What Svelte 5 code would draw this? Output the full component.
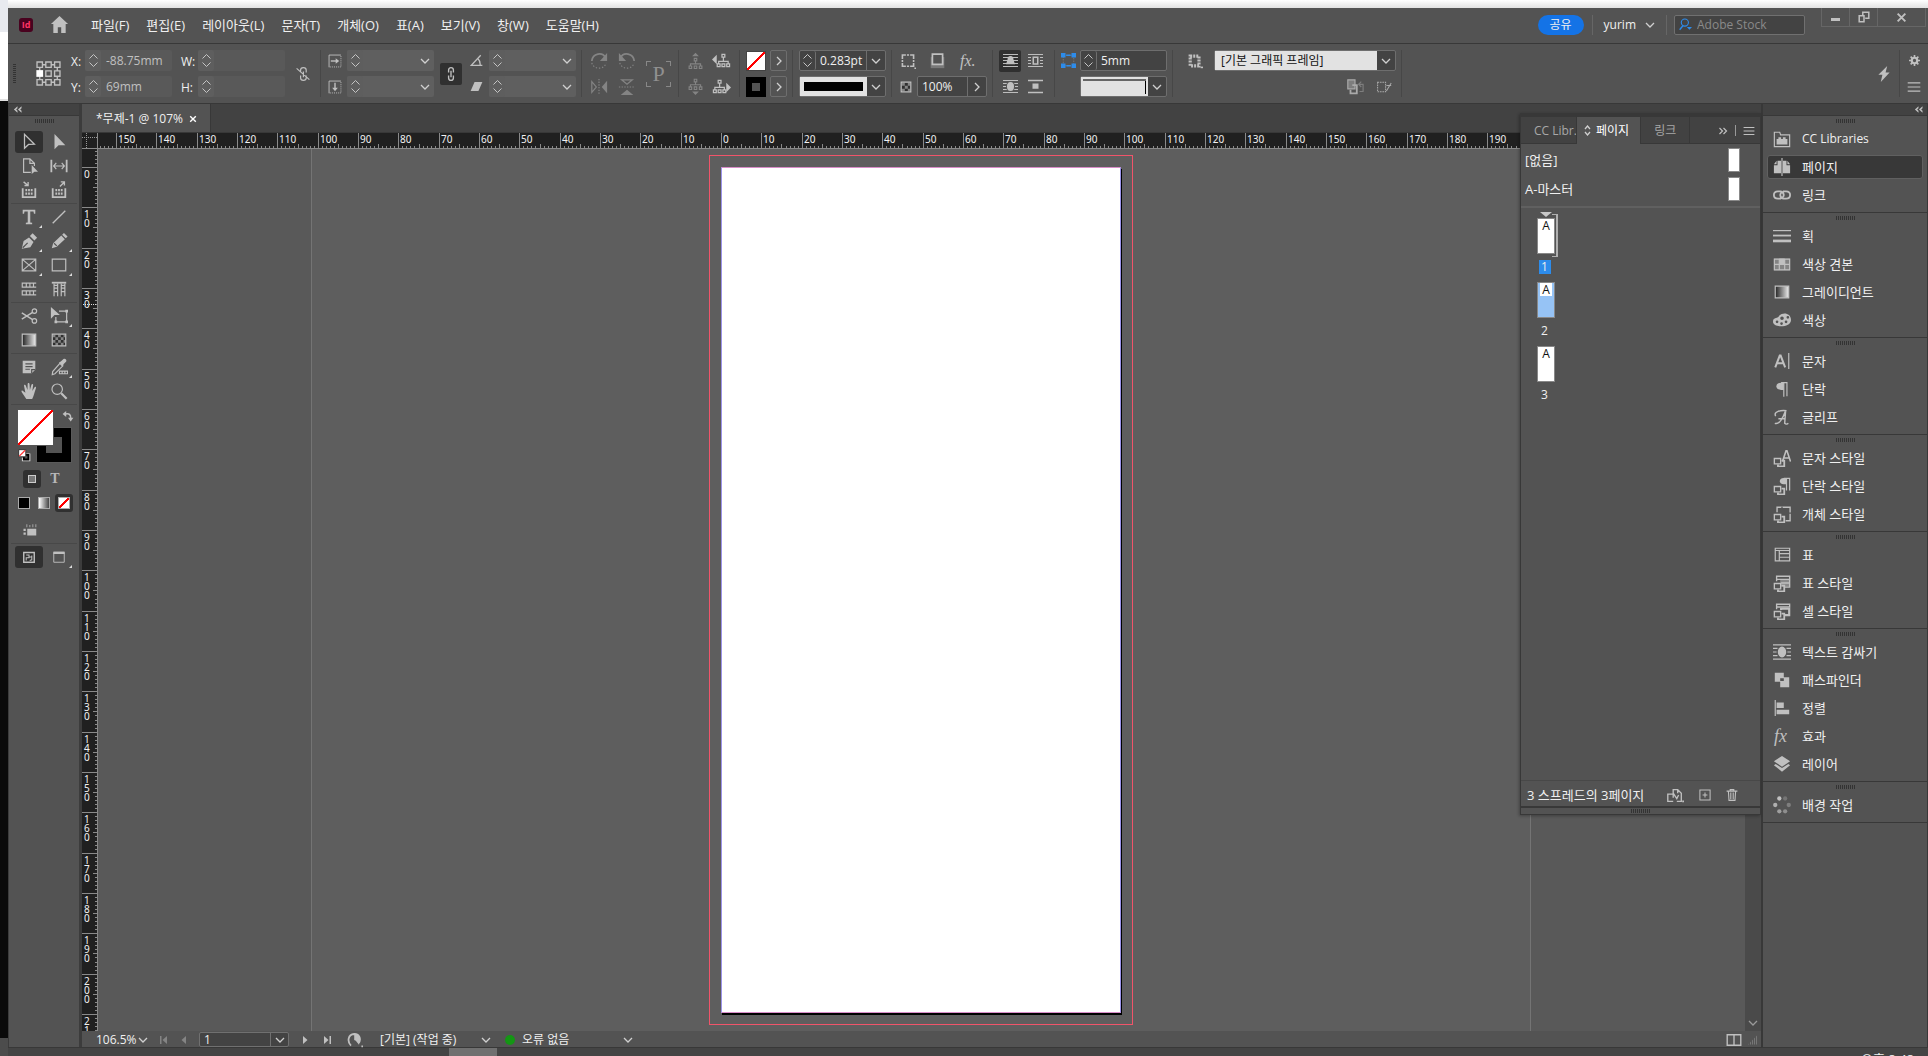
<script>
  const menus = ["파일(F)", "편집(E)", "레이아웃(L)", "문자(T)", "개체(O)", "표(A)", "보기(V)", "창(W)", "도움말(H)"];

  // every icon is drawn on a 20 x 20 grid
  const styleMark =
    '<path d="M1.5 10.5h7v6h-7z" stroke-width="1.5"/><path d="M9.5 13h3v6.2H5.500v-2" stroke-width="2"/>';

  const icons = {
    home: '<path class="f" d="M10 1 1 9.500h2.500V19h4.700v-6h3.600v6h4.700V9.500H19z"/>',
    select: '<path d="M5 1.500v15.500l4.500-4.300 6.500-.2z" stroke-width="1.4"/>',
    direct: '<path class="f" d="M5 1v17l4.500-4.500H17z"/>',
    page: '<path d="M12 17H4V2h7l5 5v3M11 2v5h5"/><path class="f" d="M13 9v10l3-2.500h4z"/>',
    gap: '<path d="M1.500 3v14M18.500 3v14" stroke-width="2"/><path d="M4 10h12M7 6.500 4 10l3 3.500M13 6.500 16 10l-3 3.500"/>',
    collect: '<path d="M3 8v10h14V8" stroke-width="2"/><path d="M6 10h2m1 0h2m1 0h2M6 14h2m1 0h2m1 0h2" stroke-width="2.500"/><path d="m4 1 5 4M9 1v4H5" stroke-width="1.500"/>',
    place: '<path d="M3 8v10h14V8" stroke-width="2"/><path d="M6 10h2m1 0h2m1 0h2M6 14h2m1 0h2m1 0h2" stroke-width="2.500"/><path d="m11 6 5-5M12 1h4v4" stroke-width="1.500"/>',
    type: '<path class="f" d="M3 2h14v4.500h-1.500L15 4h-3.600v12l2.100.5V18h-7v-1.500l2.100-.5V4H5l-.5 2.500H3z"/>',
    line: '<path d="M3 17 17 3" stroke-width="1.500"/>',
    pen: '<path class="f" d="M2 18.500 4 10l6-4 5 5-3.500 6zM11 4.500 14 1.500l5 5-3 3z"/><path class="k" d="m3 17.500 5.500-5.500"/>',
    pencil: '<path class="f" d="m2 18 1.500-5.500 9-8.500 4 4-9 8.500zM13.500 3l2-2 4 4-2 2z"/><path class="k" d="m4.500 12.500 3 3"/>',
    xframe: '<path d="M2.500 3.500h15v13h-15zM3 4l14 12M17 4 3 16"/>',
    rect: '<path d="M2.500 3.500h15v13h-15z"/>',
    rows: '<path d="M18 3.500H2.500v4.500H18M18 12H2.500v4.500H18M7 4v4M11 4v4M15 4v4M7 12v4M11 12v4M15 12v4"/>',
    cols: '<path d="M2 3h16" stroke-width="2"/><path d="M4.500 4v14M8.500 4v14M12.500 4v14M16.500 4v14M4 9h4M4 13h4M12 9h4M12 13h4M4 6h4M12 6h4"/>',
    scissors: '<circle cx="16" cy="4.500" r="2.500"/><circle cx="16" cy="15.500" r="2.500"/><path d="M14 6 2 13.500M14 14 2 6.500" stroke-width="1.700"/>',
    transform: '<path class="f" d="M1 0v13l4-4h6z"/><path d="M10 4.500h8.500v12h-12V11"/><path d="M17 3h3v3h-3zM17 15h3v3h-3zM5 15h3v3H5z" class="f"/>',
    gradient: '<path d="M2.500 3.500h15v13h-15z" fill="url(#fade)"/>',
    feather: '<path d="M2.500 3.500h15v13h-15z" fill="#303030"/><path class="f" opacity=".6" d="M3 4h3v3H3zm6 0h3v3H9zM6 7h3v3H6zm6 0h3v3h-3zM3 10h3v3H3zm6 0h3v3H9zM6 13h3v3H6zm6 0h3v3h-3zm3-9h2v3h-2zm0 6h2v3h-2z"/>',
    note: '<path class="f" d="M3 3h14v10l-4 4H3z"/><path class="k" d="M6 6.500h8M6 9.500h8M6 12.500h5M13 17v-4h4"/>',
    dropper: '<path d="m11 6 3 3-8.500 8.500-3 1 .5-3.500z"/><path class="f" d="m10 5 2-1 3-3c2-1 4 1 3 3l-3 3-.5 2.500z"/><path d="M10.500 14.500h9v3h-9zM13.500 15v2M16.500 15v2"/>',
    hand: '<path class="f" d="M7 19 2 11.500c-1-2 .500-2.500 1.700-1.200L6 12 4.500 4.500c-.3-1.800 1.500-2 2-.4L8.300 9 8.500 2.500c0-1.700 2-1.700 2.100 0L11 9l1.700-6c.5-1.500 2.200-1 1.900.5L13.700 10l2.300-4c.9-1.300 2.300-.5 1.700.9-1.500 4-2.200 8.500-4.200 12.100z"/>',
    zoom: '<circle cx="8" cy="8" r="5.800"/><path d="m12.500 12.500 6 6" stroke-width="2.400"/>',
    swap: '<path d="M6 6.500c6-1.500 8.500 1 8.500 7" stroke-width="2.500"/><path class="f" d="m1 6.500 6-5v10zM10 13h9l-4.500 6z"/>',
    defaults: '<path d="M9 8h9v10H7v-5" stroke="#ddd" stroke-width="2"/><path d="M9 9h7v7H9z" stroke="#000" stroke-width="3"/><path d="M1 1h11v11H1z" fill="#fff" stroke="#333" stroke-width="1.500"/><path d="M2 11 11 2" stroke="#f33" stroke-width="2"/>',
    toggle: '<path class="f" d="M7 9h12v9H7zM2 9h3v3H2zM2 14h3v3H2zM6 3h1v4H6zm4 1h1v3h-1zm4-1h1v4h-1zm4 0h1v4h-1z"/>',
    preview: '<path d="M2.500 3.500h15v14h-15z" stroke-width="2"/><path d="M6 7h4v4H6v4m4-5h4M14 8v6l-3 1" stroke-width="1.500"/>',
    screen: '<path d="M2.500 3.500h15v14h-15z"/><path d="M2 4h16" stroke-width="3.500"/>',
    refpoint: '<path d="M1.500 1.500h4v4h-4zm6.500 0h4v4H8zm6.500 0h4v4h-4zM8 8h4v4H8zm6.500 0h4v4h-4zm-13 6.500h4v4h-4zm6.500 0h4v4H8zm6.500 0h4v4h-4zM5.500 3.500H8m4 0h2.500m-9 13H8m4 0h2.500m-11-11v9m13-9v2.500m0 4v2.500" stroke-width="1"/><path d="M1 7.500h5v5H1z" fill="#fff" stroke="none"/>',
    unlink: '<path d="M7 8V5c0-4 7-4 7 0v3M7 12v3c0 4 7 4 7 0v-3M10.500 7v7M2 3l16 14" stroke-width="1.500"/>',
    chain: '<path d="M7 8V5c0-4 6-4 6 0v3M7 12v3c0 4 6 4 6 0v-3M10 6v8" stroke-width="1.700"/>',
    scaleX: '<path d="M1.500 19V1.500h17"/><path d="M18.500 3v15.500H2" stroke-dasharray="1.500 1.500"/><path d="M4 10h10" stroke-width="2"/><path class="f" d="m11 6 5 4-5 4z"/>',
    scaleY: '<path d="M1.500 19V1.500h17"/><path d="M18.500 3v15.500H2" stroke-dasharray="1.500 1.500"/><path d="M10 4v10" stroke-width="2"/><path class="f" d="m6 11 4 5 4-5z"/>',
    angle: '<path d="M16.500 2 2 17.500h17M12 7c3 3 4 6 3.500 10" stroke-width="2"/>',
    shear: '<path class="f" d="M7 3h12l-6 14H1z"/>',
    rotateCw: '<path d="M2 10C3 1 14 0 17 6" stroke-width="2"/><path class="f" d="M19 1v9h-8z"/><path d="M2 12c2 8 14 8 16 0" stroke-dasharray="1.500 2"/>',
    rotateCcw: '<path d="M18 10C17 1 6 0 3 6" stroke-width="2"/><path class="f" d="M1 1v9h8z"/><path d="M2 12c2 8 14 8 16 0" stroke-dasharray="1.500 2"/>',
    flipH: '<path d="M2 4v12l5-6z"/><path class="f" d="M19 3v14l-6-7z"/><path d="M10 1v18" stroke-dasharray="1.500 1.500"/>',
    flipV: '<path d="M4 2h12l-6 5z"/><path class="f" d="M3 19h14l-7-6z"/><path d="M1 10h18" stroke-dasharray="1.500 1.500"/>',
    treeUp: '<path class="f" d="m6 5 4-4 4 4z"/><path d="M8.500 7.500h3v3h-3zM10 11v3M4 16v-2h12v2M2.500 16.500h3v3h-3zm6 0h3v3h-3zm6 0h3v3h-3z"/>',
    treeDown: '<path class="f" d="m6 16 4 4 4-4z"/><path d="M8.500 1.500h3v3h-3zM10 5v3M4 10V8h12v2M2.500 10.500h3v3h-3zm6 0h3v3h-3zm6 0h3v3h-3z"/>',
    treePrev: '<path class="f" d="m0 9 5-5v10z"/><path d="M10.500 3.500h3v3h-3zM12 7v4M7 14v-3h10v3M5.500 13.500h3v3h-3zm5 0h3v3h-3zm5 0h3v3h-3z"/>',
    treeNext: '<path class="f" d="m20 11-5-5v10z"/><path d="M6.500 3.500h3v3h-3zM8 7v4M3 14v-3h10v3M1.500 13.500h3v3h-3zm5 0h3v3h-3zm5 0h3v3h-3z"/>',
    corner: '<path d="M3 2.500h14v14H3z" stroke-width="2"/><path class="k" d="M8 1v4M12 1v4M8 14v4M12 14v4M1 8h4M1 12h4M15 8h4M15 12h4"/><path class="f" d="M18 18h2v2h-2z"/>',
    shadow: '<path class="f" opacity=".35" d="M2 6h16v13H2z"/><path d="M4 2.500h12v12H4z" fill="#535353" stroke-width="2"/>',
    opacity: '<path d="M2 2h16v16H2z" fill="#303030" stroke-width="2"/><path class="f" opacity=".6" d="M3 3h5v5H3zm5 5h5v5H8zm5-5h4v5h-4zM3 13h5v4H3zm10 0h4v4h-4z"/>',
    wrapNone: '<path d="M0 2h20M0 6h20M0 10h20M0 14h20M0 18h20"/><path class="f" d="M10 4c3 0 4 2 4 5l2 6H4l2-6c0-3 1-5 4-5z"/>',
    wrapBox: '<path d="M0 2h20M0 6h4M0 10h4M0 14h4M0 18h20M16 6h4M16 10h4M16 14h4"/><path d="M7 5.500h6v9H7z" stroke-width="2"/>',
    wrapShape: '<path d="M0 2h20M0 6h5M0 10h4M0 14h5M0 18h20M15 6h5M16 10h4M15 14h5"/><ellipse class="f" cx="10" cy="10" rx="4.700" ry="6"/>',
    wrapJump: '<path d="M0 2h20M0 18h20" stroke-width="2"/><path class="f" d="M6 6h8v7H6z"/>',
    blueCorner: '<path d="M3 3h14v14H3z" stroke="#777" stroke-dasharray="2 1.500"/><path fill="#2d8ceb" stroke="none" d="M0 0h6v6H0zM14 0h6v6h-6zM0 14h6v6H0zM14 14h6v6h-6zM7 2h6v2H7zM7 16h6v2H7z"/>',
    frame: '<path d="M4 4h11v12H4z" stroke-width="4" stroke-dasharray="2.500 1.300"/><path class="f" d="M17 17h3v2h-3z"/>',
    clear: '<path d="M2 2h8v10H2z" fill="#888"/><path d="M7 8h5v9H5v-4" stroke-width="2"/><path d="M14 7h5v8h-4m2-11-3 3 3 3" opacity=".5"/>',
    clearFx: '<path d="M2 4h10v12H2z" stroke-dasharray="2 1"/><path d="m13 15 6-10M13 8h6"/>',
    bolt: '<path class="f" d="M14 0 3 11h5L6 20 17 8h-5z"/>',
    gear: '<circle cx="10" cy="10" r="5" stroke-width="4"/><path d="M10 0v4m0 12v4M0 10h4m12 0h4M3 3l3 3m8 8 3 3M17 3l-3 3m-8 8-3 3" stroke-width="3"/>',
    menu: '<path d="M1 4h18M1 10h18M1 16h18" stroke-width="1.700"/>',
    collapse: '<path class="f" d="m10 3-8 7 8 7v-4l-3-3 3-3zM19 3l-8 7 8 7v-4l-3-3 3-3z"/>',
    expand: '<path d="m3 4 6 6-6 6M11 4l6 6-6 6" stroke-width="2.400"/>',
    libraries: '<path d="M1.500 18.500V2.500h6l1 3h10v13z"/><path class="f" d="M4 10h2V8h3v2h2V8h3v2h2v6H4z"/>',
    pages: '<path d="M10 0v20"/><path class="f" d="M1 8h4V3h4v14H1zM19 8h-4V3h-4v14h8zM1 7l3-4v4zM19 7l-3-4v4z"/>',
    links: '<path d="M9 14H5.500c-6 0-6-8 0-8H8c4.500 0 5 6 2 7M11 6h3.500c6 0 6 8 0 8H12c-4.500 0-5-6-2-7" stroke-width="2"/>',
    stroke: '<path d="M0 4h20" /><path d="M0 9.500h20" stroke-width="2"/><path d="M0 15.500h20" stroke-width="3"/>',
    swatches: '<path class="f" opacity=".45" d="M1 4h18v13H1z"/><path class="f" d="M7 4h6v6H7z"/><path d="M1.500 4.500h17v12h-17zM7 4v13M13 4v13M1 10.500h18"/>',
    color: '<path class="f" fill-rule="evenodd" d="M7 5c-1 4-7 1-7 7 0 7 20 7 20-2C20 2 11 1 7 5zm1 3a2 2 0 1 0 4 0 2 2 0 0 0-4 0zm7-1a1.500 1.500 0 1 0 3 0 1.500 1.500 0 0 0-3 0zM3 12a1.500 1.500 0 1 0 3 0 1.500 1.500 0 0 0-3 0zm5 2a1.500 1.500 0 1 0 3 0 1.500 1.500 0 0 0-3 0zm5-2a1.500 1.500 0 1 0 3 0 1.500 1.500 0 0 0-3 0z"/>',
    character: '<path d="m2.500 17 5-13h1l5 13M4.500 12.500h7" stroke-width="2.200"/><path d="M17.500 1v18"/>',
    paragraph: '<path class="f" d="M9 3h3v8H9c-7 0-7-8 0-8z"/><path d="M12 2.500v16M15.500 18V3H9"/>',
    glyphs: '<path d="M2 17c5 2 9-6 12-14l-1 14c1 1 3 1 4 0M6 12h8M3 9c-3-5 6-7 12-6" stroke-width="1.600"/>',
    charStyle: '<path d="m10.500 14 4-12h1l4 12M12 10h6" stroke-width="1.800"/>' + styleMark,
    paraStyle: '<path class="f" d="M12 1h3v7h-3c-6 0-6-7 0-7z"/><path d="M15 1v14M18.500 15V1.500H12"/>' + styleMark,
    objStyle: '<path d="M4.500 8V2.500H19v15h-5" stroke-width="1.500"/><path class="k" d="M9 2.500h2M17 9h3"/>' + styleMark,
    table: '<path d="M2.500 2.500h16v14h-16zM2.500 5h16M7 5v11M7 8.500h11M7 12.500h11"/>',
    tableStyle: '<path class="f" opacity=".5" d="M8 6h10v8H8z"/><path d="M4 8V2.500h14.500v12H13M4 6h14M9 10h9" stroke-width="1.500"/>' + styleMark,
    cellStyle: '<path d="M4 8V2.500h14.500v3H4" stroke-width="1.500"/><path d="M9 9V7.500h9v7h-5" stroke-width="2.400"/>' + styleMark,
    pathfinder: '<path class="f" fill-rule="evenodd" d="M2 2h10v5h6v11H8v-6H2zm6 6v3h4V8z"/>',
    align: '<path d="M2.500 1v18"/><path class="f" d="M4 4h8v6H4zM4 12h14v5H4z"/>',
    layers: '<path class="f" d="m10 1 9 6-9 6-9-6zM3 10l7 4.500L17 10l2 1.500-9 7-9-7z"/>',
    tasks: '<g class="f"><circle cx="7" cy="2.800" r="2.400"/><circle cx="13.500" cy="2.800" r="2.400" opacity=".3"/><circle cx="2.500" cy="10" r="2.400" opacity=".85"/><circle cx="17.500" cy="10" r="2.400" opacity=".4"/><circle cx="7" cy="17" r="2.400" opacity=".7"/><circle cx="13.500" cy="17" r="2.400" opacity=".55"/></g>',
    newSize: '<path d="M8 17H2V9h6M8 13V4h5l4 4v9h-5M13 4v4M8 8l4 6 2-4" stroke-width="1.500"/><path class="f" d="M18 16h2v2h-2z"/>',
    newPage: '<path d="M1.500 1.500h17v17h-17zM10 6v8M6 10h8" stroke-width="1.700"/>',
    trash: '<path d="M1 3.500h18M7 3V1h6v2M4 4l1 15h10l1-15M8 6v11M12 6v11" stroke-width="1.800"/>',
    first: '<path d="M3.500 2v16" stroke-width="3"/><path class="f" d="M16 2v16l-9-8z"/>',
    prev: '<path class="f" d="M14 2v16l-9-8z"/>',
    next: '<path class="f" d="M6 2v16l9-8z"/>',
    last: '<path d="M16.500 2v16" stroke-width="3"/><path class="f" d="M4 2v16l9-8z"/>',
    preflight: '<path d="M5 17C0 12 1 3 9 2.500c6 0 9 5 6 11" stroke-width="2.200"/><path class="f" d="M9 2c8 0 8 8 6 14l-4-5-2-1zM18 17h2v2h-2z"/>',
    spread: '<path d="M1.500 3.500h17v13h-17z" stroke-width="1.700"/><path d="M10 3v14" stroke-width="1.700"/>',
    restore: '<path d="M2 8h8v10H2z" stroke-width="2.500"/><path d="M8 7V2h10v10h-6" stroke-width="2.500"/>',
    close: '<path d="m3 3 14 14M17 3 3 17" stroke-width="3.500"/>',
    search: '<circle cx="9" cy="7" r="5.500" stroke-width="1.700"/><path d="m6 12-5 6" stroke-width="2.200"/><path class="f" d="M12 14h8l-4 4z"/>'
  };

  const tools = [
    [["select", "선택"], ["direct", "직접 선택"], ["page", "페이지"], ["gap", "간격"], ["collect", "내용 수집"], ["place", "내용 배치"]],
    [["type", "문자", true], ["line", "선"], ["pen", "펜", true], ["pencil", "연필", true], ["xframe", "사각형 프레임", true], ["rect", "사각형", true], ["rows", "가로 격자"], ["cols", "세로 격자"]],
    [["scissors", "가위"], ["transform", "자유 변형", true], ["gradient", "그레이디언트"], ["feather", "그레이디언트 페더"]],
    [["note", "메모"], ["dropper", "스포이드", true], ["hand", "손"], ["zoom", "확대/축소"]]
  ];

  const dock = [
    [["libraries", "CC Libraries"], ["pages", "페이지"], ["links", "링크"]],
    [["stroke", "획"], ["swatches", "색상 견본"], ["gradient", "그레이디언트"], ["color", "색상"]],
    [["character", "문자"], ["paragraph", "단락"], ["glyphs", "글리프"]],
    [["charStyle", "문자 스타일"], ["paraStyle", "단락 스타일"], ["objStyle", "개체 스타일"]],
    [["table", "표"], ["tableStyle", "표 스타일"], ["cellStyle", "셀 스타일"]],
    [["wrapShape", "텍스트 감싸기"], ["pathfinder", "패스파인더"], ["align", "정렬"], ["fx", "효과"], ["layers", "레이어"]],
    [["tasks", "배경 작업"]]
  ];

  let activeTool = $state("select");
  let activePanel = $state("페이지");
  let currentPage = $state(1);

  // rulers: 10mm is 40.33px on screen at this zoom
  const scale = 4.033;
  const originX = 623;
  const originY = 18;

  function ticks(origin, from, to, size, vertical) {
    let d = "";
    for (let mm = from; mm <= to; mm++) {
      const at = Math.round(origin + mm * scale);
      const len = mm % 10 === 0 ? size : mm % 5 === 0 ? 4 : 2;
      d += vertical ? `M${size - len} ${at}h${len}v1h-${len}z` : `M${at} ${size - len}h1v${len}h-1z`;
    }
    return d;
  }

  const labels = (origin, from, to) => {
    const out = [];
    for (let mm = from; mm <= to; mm += 10) {
      out.push({ text: String(Math.abs(mm)), at: Math.round(origin + mm * scale) });
    }
    return out;
  };

  const topTicks = ticks(originX, -154, 260, 15, false);
  const topLabels = labels(originX, -150, 190);
  const sideTicks = ticks(originY, -4, 240, 15, true);
  const sideLabels = labels(originY, 0, 210);
</script>

{#snippet icon(name, size = 18)}
  {#if name === "fx"}
    <span class="fx" aria-hidden="true">fx</span>
  {:else}
    <svg class="icon" width={size} height={size} viewBox="0 0 20 20" aria-hidden="true">{@html icons[name]}</svg>
  {/if}
{/snippet}

{#snippet chevron()}
  <svg class="chev" width="10" height="6" viewBox="0 0 10 6" aria-hidden="true"><path d="m1 1 4 4 4-4" /></svg>
{/snippet}

{#snippet spinner()}
  <span class="spinner">
    <button aria-label="증가"><svg width="9" height="5" viewBox="0 0 9 5"><path d="M.5 4.500 4.500 .5l4 4" /></svg></button>
    <button aria-label="감소"><svg width="9" height="5" viewBox="0 0 9 5"><path d="M.5 .5l4 4 4-4" /></svg></button>
  </span>
{/snippet}

{#snippet field(id, label, value, kind, drop)}
  <div class="field {kind}">
    {@render spinner()}
    <input {id} aria-label={label} {value} />
    {#if drop}<button class="drop" aria-label="{label} 목록">{@render chevron()}</button>{/if}
  </div>
{/snippet}

{#snippet thumb(n)}
  <button class="thumb" class:selected={n === 2} onclick={() => (currentPage = n)} aria-label="{n}페이지"><span>A</span></button>
{/snippet}

<svg width="0" height="0" class="defs" aria-hidden="true">
  <linearGradient id="fade"><stop offset="0" stop-color="#222" /><stop offset="1" stop-color="#eee" /></linearGradient>
</svg>

<div class="desktop">
  <div class="behind"></div>
  <div class="above"></div>

  <div class="app">
    <header class="menubar">
      <span class="logo">Id</span>
      <button class="home" aria-label="홈">{@render icon("home", 19)}</button>
      <nav>
        {#each menus as menu}<button>{menu}</button>{/each}
      </nav>
      <button class="share">공유</button>
      <button class="user">yurim {@render chevron()}</button>
      <label class="search">
        {@render icon("search", 13)}
        <input placeholder="Adobe Stock" aria-label="Adobe Stock" />
      </label>
      <div class="window">
        <button aria-label="최소화"><span class="minimize"></span></button>
        <button aria-label="이전 크기로">{@render icon("restore", 12)}</button>
        <button aria-label="닫기">{@render icon("close", 11)}</button>
      </div>
    </header>

    <div class="control">
      <span class="vgrip"></span>
      <span class="ref">{@render icon("refpoint", 27)}</span>
      <div class="grid xywh">
        <label for="x">X:</label>{@render field("x", "X", "-88.75mm", "off dim")}
        <label for="w" class="right">W:</label>{@render field("w", "W", "", "off")}
        <label for="y">Y:</label>{@render field("y", "Y", "69mm", "off dim")}
        <label for="h" class="right">H:</label>{@render field("h", "H", "", "off")}
      </div>
      <button class="unlink" aria-label="비율 유지">{@render icon("unlink", 16)}</button>
      <i class="sep wide"></i>
      <div class="grid pair">
        {@render icon("scaleX", 14)}{@render field("sx", "X 비율", "", "off flat", true)}
        {@render icon("scaleY", 14)}{@render field("sy", "Y 비율", "", "off flat", true)}
      </div>
      <button class="chain" aria-label="비율 고정">{@render icon("chain", 16)}</button>
      <div class="grid pair">
        {@render icon("angle", 13)}{@render field("rot", "회전", "", "off flat", true)}
        {@render icon("shear", 13)}{@render field("shear", "기울이기", "", "off flat", true)}
      </div>
      <i class="sep"></i>
      <div class="grid turn faint">
        {@render icon("rotateCw", 18)}{@render icon("rotateCcw", 18)}
        {@render icon("flipH", 18)}{@render icon("flipV", 18)}
      </div>
      <span class="proxy">P</span>
      <i class="sep"></i>
      <div class="grid tree">
        <span class="faint">{@render icon("treeUp", 17)}</span>{@render icon("treePrev", 19)}
        <span class="faint">{@render icon("treeDown", 17)}</span>{@render icon("treeNext", 19)}
      </div>
      <i class="sep"></i>
      <div class="grid fill">
        <span class="swatch none"></span><button class="more" aria-label="칠"><svg class="chev" width="6" height="10" viewBox="0 0 6 10"><path d="m1 1 4 4-4 4" /></svg></button>
        <span class="swatch ring"></span><button class="more" aria-label="획"><svg class="chev" width="6" height="10" viewBox="0 0 6 10"><path d="m1 1 4 4-4 4" /></svg></button>
      </div>
      <i class="sep"></i>
      <div class="grid">
        {@render field("weight", "획 두께", "0.283pt", "on", true)}
        <button class="sample" aria-label="획 유형"><span class="bar"></span>{@render chevron()}</button>
      </div>
      <i class="sep"></i>
      <div class="grid effects">
        <div class="row">{@render icon("corner", 16)}{@render icon("shadow", 17)}<span class="fx small">fx.</span></div>
        <div class="row tight">
          {@render icon("opacity", 12)}
          <div class="field on percent">
            <input aria-label="불투명도" value="100%" />
            <button class="drop" aria-label="불투명도 목록"><svg class="chev" width="6" height="10" viewBox="0 0 6 10"><path d="m1 1 4 4-4 4" /></svg></button>
          </div>
        </div>
      </div>
      <i class="sep"></i>
      <div class="grid wrap">
        <button class="pressed" aria-label="감싸기 없음">{@render icon("wrapNone", 15)}</button>{@render icon("wrapBox", 15)}
        <button aria-label="모양 감싸기">{@render icon("wrapShape", 15)}</button>{@render icon("wrapJump", 15)}
      </div>
      <i class="sep"></i>
      <div class="grid pair">
        {@render icon("blueCorner", 15)}{@render field("radius", "모퉁이 크기", "5mm", "on")}
        <span></span><button class="sample" aria-label="모퉁이 모양"><span class="edge"></span>{@render chevron()}</button>
      </div>
      <i class="sep"></i>
      <div class="grid style">
        {@render icon("frame", 16)}
        <div class="picker">
          <select aria-label="개체 스타일"><option>[기본 그래픽 프레임]</option></select>
          <span class="arrow">{@render chevron()}</span>
        </div>
        <div class="row reset">{@render icon("clear", 18)}{@render icon("clearFx", 16)}</div>
      </div>
      <i class="sep"></i>
      <span class="spacer"></span>
      <button class="bolt" aria-label="빠른 작업">{@render icon("bolt", 16)}</button>
      <i class="sep last"></i>
      <div class="grid end">{@render icon("gear", 11)}{@render icon("menu", 14)}</div>
    </div>

    <div class="workspace">
      <aside class="toolbox">
        <div class="strip left">{@render icon("collapse", 9)}</div>
        <span class="grip"></span>
        {#each tools as section}
          <div class="tools">
            {#each section as [name, label, more]}
              <button class="tool" class:active={activeTool === name} class:flyout={more} aria-label={label} onclick={() => (activeTool = name)}>
                {@render icon(name, 18)}
              </button>
            {/each}
          </div>
        {/each}
        <div class="colors">
          <span class="stroke-color"></span>
          <span class="fill-color"></span>
          <span class="swap">{@render icon("swap", 12)}</span>
          <span class="default">{@render icon("defaults", 13)}</span>
        </div>
        <div class="mode">
          <button class="pressed" aria-label="컨테이너에 서식 적용"><span class="box"></span></button>
          <button aria-label="텍스트에 서식 적용" class="serif">T</button>
        </div>
        <div class="apply">
          <button aria-label="색상"><span class="chip"></span></button>
          <button aria-label="그레이디언트"><span class="chip grad"></span></button>
          <button aria-label="없음" class="pressed"><span class="chip none"></span></button>
        </div>
        <div class="toggle">{@render icon("toggle", 15)}</div>
        <div class="tools view">
          <button class="tool active" aria-label="보기 옵션">{@render icon("preview", 14)}</button>
          <button class="tool flyout" aria-label="화면 모드">{@render icon("screen", 14)}</button>
        </div>
      </aside>

      <main class="document">
        <div class="tabs">
          <div class="tab">*무제-1 @ 107%<button aria-label="탭 닫기">{@render icon("close", 8)}</button></div>
        </div>
        <div class="ruler">
          <span class="origin"></span>
          <svg class="top-ruler" height="15">
            <path d={topTicks} />
            {#each topLabels as l}<text x={l.at + 2} y="10">{l.text}</text>{/each}
          </svg>
        </div>
        <div class="body">
          <div class="side">
            <svg width="15" height="100%">
              <path d={sideTicks} />
              <path class="cursor" d="M1 155.500h14" />
              {#each sideLabels as l}
                {#each l.text.split("") as digit, i}<text x="2" y={l.at + 11 + i * 9}>{digit}</text>{/each}
              {/each}
            </svg>
          </div>
          <div class="canvas">
            <div class="pasteboard"></div>
            <div class="bleed"></div>
            <div class="sheet"></div>
          </div>
          <div class="scroll">{@render chevron()}</div>
        </div>
        <footer class="status">
          <span class="zoom">106.5%</span>{@render chevron()}
          <button class="faint nav-first" aria-label="첫 페이지">{@render icon("first", 10)}</button>
          <button class="faint nav-prev" aria-label="이전 페이지">{@render icon("prev", 10)}</button>
          <div class="goto"><input aria-label="페이지" value={currentPage} /><span>{@render chevron()}</span></div>
          <button class="nav-next" aria-label="다음 페이지">{@render icon("next", 10)}</button>
          <button class="nav-last" aria-label="마지막 페이지">{@render icon("last", 10)}</button>
          <span class="preflight">{@render icon("preflight", 16)}</span>
          <span class="profile">[기본] (작업 중)</span>{@render chevron()}
          <span class="dot"></span>
          <span class="errors">오류 없음</span>{@render chevron()}
          <span class="spacer"></span>
          {@render icon("spread", 16)}
          <span class="resize"></span>
        </footer>

        <section class="panel">
          <div class="panel-tabs">
            <button class="clip">CC Libr.</button>
            <button class="current"><svg class="chev" width="7" height="11" viewBox="0 0 7 11"><path d="m1 4 2.500-3L6 4M1 7l2.500 3L6 7" /></svg>페이지</button>
            <button>링크</button>
            <span class="spacer"></span>
            {@render icon("expand", 10)}
            <i></i>
            {@render icon("menu", 12)}
          </div>
          <div class="masters">
            <div class="master">[없음]<span></span></div>
            <div class="master">A-마스터<span></span></div>
          </div>
          <div class="pages">
            <svg class="marker" width="12" height="5" viewBox="0 0 12 5"><path d="M0 0h12L6 5z" /></svg>
            <div class="first">{@render thumb(1)}</div>
            <span class="num now">1</span>
            {@render thumb(2)}
            <span class="num">2</span>
            {@render thumb(3)}
            <span class="num">3</span>
          </div>
          <div class="panel-foot">
            <span>3 스프레드의 3페이지</span>
            <button aria-label="페이지 크기 편집">{@render icon("newSize", 18)}</button>
            <button aria-label="새 페이지">{@render icon("newPage", 12)}</button>
            <button aria-label="페이지 삭제">{@render icon("trash", 12)}</button>
          </div>
          <div class="panel-end"><span class="grip"></span></div>
        </section>
      </main>

      <aside class="dock">
        <div class="strip right">{@render icon("collapse", 9)}</div>
        {#each dock as group}
          <div class="group">
            <span class="grip"></span>
            {#each group as [name, label]}
              <button class="entry" class:active={activePanel === label} class:latin={label === "CC Libraries"} onclick={() => (activePanel = label)}>
                <span class="glyph">{@render icon(name, 18)}</span>{label}
              </button>
            {/each}
          </div>
        {/each}
      </aside>
    </div>
  </div>

  <div class="taskbar"><span class="task"></span><span class="clock">오후 8:48</span></div>
</div>

<style>
  :global(body) {
    overflow: hidden;
    background: #444;
  }

  .desktop,
  .desktop * {
    box-sizing: border-box;
  }

  .desktop {
    --ui: "Open Sans", "Noto Sans CJK KR", sans-serif;
    --edge: #383838;
    display: grid;
    grid-template: 8px 1fr 8px / 8px 1fr;
    height: 100vh;
    font: 13px/16px var(--ui);
    color: #f0f0f0;
    cursor: default;
  }

  button,
  input,
  select {
    font: inherit;
    color: inherit;
    background: none;
    border: 0;
    border-radius: 0;
    padding: 0;
    margin: 0;
    min-width: 0;
    outline: 0;
  }

  .defs {
    position: absolute;
  }

  .icon {
    display: block;
    flex: none;
    fill: none;
    stroke: currentColor;
    stroke-width: 1.3;
    color: #c0c0c0;
  }

  .icon :global(.f) {
    fill: currentColor;
    stroke: none;
  }

  .icon :global(.k) {
    stroke: #535353;
  }

  .chev {
    display: block;
    flex: none;
    fill: none;
    stroke: #d0d0d0;
    stroke-width: 1.3;
  }

  .fx {
    font: italic 18px/18px "Liberation Serif", serif;
    color: #c0c0c0;
    padding-left: 1px;
  }

  .faint {
    opacity: 0.45;
  }

  .spacer {
    flex: 1;
  }

  .behind {
    grid-row: 1 / 4;
    background: linear-gradient(#e8eaef 32px, #fff 32px 99px, #e0e0e0 99px 101px, #0a0a0a 101px calc(100% - 18px), #4c4c4c 0);
  }

  .above {
    background: linear-gradient(#fff, #e2e2e2);
  }

  .app {
    display: flex;
    flex-direction: column;
    min-width: 0;
    min-height: 0;
    background: #535353;
  }

  /* menu bar */
  .menubar {
    display: flex;
    align-items: center;
    height: 36px;
    flex: none;
    padding-bottom: 2px;
    border-bottom: 1px solid var(--edge);
  }

  .logo {
    width: 14px;
    height: 14px;
    margin-left: 11px;
    border-radius: 3px;
    background: #49021f;
    color: #ff3366;
    font: bold 9px/14px "Open Sans", sans-serif;
    text-align: center;
  }

  .home {
    margin: 0 22px 0 17px;
  }

  nav {
    display: flex;
    gap: 17px;
    flex: 1;
  }

  .share {
    width: 46px;
    height: 20px;
    margin-right: 8px;
    border-radius: 10px;
    background: #1473e6;
    font-size: 12px;
  }

  .user {
    display: flex;
    align-items: center;
    gap: 9px;
    height: 20px;
    padding: 0 11px;
    border: solid #666;
    border-width: 0 1px;
    font-size: 12px;
  }

  .search {
    display: flex;
    align-items: center;
    gap: 5px;
    width: 131px;
    height: 20px;
    margin: 0 16px 0 7px;
    padding-left: 4px;
    border: 1px solid #707070;
    border-radius: 2px;
    background: #434343;
    font-size: 12px;
  }

  .search .icon {
    color: #2d8ceb;
  }

  .search input {
    width: 100%;
  }

  .search input::placeholder {
    color: #8a8a8a;
  }

  .window {
    display: flex;
    align-self: flex-start;
    height: 19px;
    margin-right: 2px;
    border: solid #666;
    border-width: 0 1px 1px;
  }

  .window button {
    display: grid;
    place-items: center;
    width: 28px;
    border-right: 1px solid #666;
  }

  .window button:last-child {
    width: 47px;
    border: 0;
  }

  .minimize {
    width: 9px;
    height: 3px;
    margin-top: 5px;
    background: #c0c0c0;
  }

  /* control bar */
  .control {
    display: flex;
    height: 60px;
    flex: none;
    padding: 6px 7px 6px 5px;
    border-bottom: 1px solid var(--edge);
  }

  .control > button,
  .control > span {
    align-self: center;
    flex: none;
  }

  .control > .spacer {
    flex: 1;
  }

  .vgrip {
    width: 3px;
    height: 20px;
    background: repeating-linear-gradient(#333 0 1px, transparent 1px 2px);
  }

  .ref {
    margin: 0 9px 0 19px;
  }

  .grid {
    display: grid;
    grid-template-rows: 21px 21px;
    row-gap: 5px;
    align-items: center;
    flex: none;
  }

  .grid label {
    padding-top: 3px;
    font-size: 12px;
  }

  .xywh {
    grid-template-columns: 14px 96px 14px 90px;
  }

  .xywh .right + .field {
    margin-left: 3px;
  }

  .pair {
    grid-template-columns: 19px 87px;
  }

  .field {
    display: flex;
    width: 87px;
    height: 21px;
    border-radius: 2px;
    font-size: 12px;
  }

  .field.off {
    background: #595959;
  }

  .field.flat {
    background: #5f5f5f;
  }

  .field.dim input {
    color: #c0c0c0;
  }

  .field.on {
    background: #434343;
    border: 1px solid #6e6e6e;
  }

  .field input {
    flex: 1;
    width: 0;
    padding-left: 5px;
  }

  .field.on input {
    padding-left: 4px;
  }

  .field.percent {
    width: 70px;
  }

  .spinner {
    display: flex;
    flex-direction: column;
    justify-content: space-evenly;
    align-items: center;
    width: 16px;
    flex: none;
    border-radius: 2px;
    background: #5e5e5e;
  }

  .on .spinner {
    background: none;
    border-right: 1px solid #6e6e6e;
  }

  .spinner button,
  .spinner svg {
    display: block;
    fill: none;
    stroke: #c4c4c4;
  }

  .drop {
    display: grid;
    place-items: center;
    width: 19px;
    flex: none;
  }

  .on .drop {
    border-left: 1px solid #6e6e6e;
  }

  .unlink {
    margin: 0 9px 0 10px;
  }

  .sep {
    width: 1px;
    flex: none;
    margin: 0 6px 0 5px;
    background: #474747;
  }

  .sep.wide {
    margin: 0 7px 0 0;
  }

  .sep.last {
    margin: 0 7px;
  }

  .chain {
    display: grid;
    place-items: center;
    width: 22px;
    height: 22px;
    margin: 0 8px 0 6px;
    border-radius: 2px;
    background: #303030;
  }

  .turn {
    grid-template-columns: 28px 21px;
    margin-left: 2px;
  }

  .proxy {
    width: 25px;
    height: 26px;
    margin: 0 2px 0 7px;
    background:
      linear-gradient(#888 0 0) 0 0 / 5px 1px, linear-gradient(#888 0 0) 0 0 / 1px 5px,
      linear-gradient(#888 0 0) 100% 0 / 5px 1px, linear-gradient(#888 0 0) 100% 0 / 1px 5px,
      linear-gradient(#888 0 0) 0 100% / 5px 1px, linear-gradient(#888 0 0) 0 100% / 1px 5px,
      linear-gradient(#888 0 0) 100% 100% / 5px 1px, linear-gradient(#888 0 0) 100% 100% / 1px 5px;
    background-repeat: no-repeat;
    font: 22px/25px "Liberation Serif", serif;
    text-align: center;
    color: #909090;
  }

  .tree {
    grid-template-columns: 25px 22px;
    margin-left: 2px;
  }

  .fill {
    grid-template-columns: 24px 17px;
  }

  .swatch {
    width: 20px;
    height: 20px;
    border: 1px solid #444;
  }

  .none {
    background: linear-gradient(to bottom right, #fff 46%, #f00 46% 54%, #fff 54%);
  }

  .ring {
    border: 6px solid #000;
    background: #535353;
  }

  .more {
    display: grid;
    place-items: center;
    height: 21px;
    border: 1px solid #6e6e6e;
    border-radius: 2px;
  }

  .sample {
    display: flex;
    align-items: center;
    gap: 4px;
    width: 87px;
    height: 21px;
    border: 1px solid #6e6e6e;
    border-radius: 2px;
    background: #434343;
  }

  .sample span {
    width: 67px;
    height: 19px;
    border: solid #e2e2e2;
    border-width: 5px 4px;
    background: #000;
  }

  .sample .edge {
    border: 2px solid #e2e2e2;
    background: linear-gradient(#666 0 0) 0 0 / 100% 2px no-repeat, linear-gradient(#000 0 0) 100% 0 / 1px 100% no-repeat, #e2e2e2;
  }

  .row {
    display: flex;
    align-items: center;
    gap: 13px;
  }

  .row.tight {
    gap: 5px;
  }

  .effects {
    margin-left: 2px;
  }

  .fx.small {
    font-size: 16px;
  }

  .wrap {
    grid-template-columns: 29px 21px;
  }

  .wrap button {
    display: grid;
    place-items: center;
    width: 22px;
    height: 22px;
    border-radius: 2px;
  }

  .pressed {
    background: #303030;
  }

  .style {
    grid-template-columns: 27px 182px;
    margin-left: 8px;
  }

  .picker {
    display: flex;
    height: 21px;
    border: 1px solid #6e6e6e;
    border-radius: 2px;
    background: #434343;
  }

  .picker select {
    flex: 1;
    appearance: none;
    padding-left: 6px;
    background: #e2e2e2;
    color: #111;
    font-size: 12px;
  }

  .arrow {
    display: grid;
    place-items: center;
    width: 18px;
  }

  .reset {
    grid-column: 2;
    justify-content: flex-end;
    padding-right: 4px;
    gap: 12px;
    opacity: 0.8;
  }

  .end {
    justify-items: center;
  }

  /* tool box */
  .workspace {
    display: flex;
    flex: 1;
    min-height: 0;
    border-bottom: 1px solid var(--edge);
  }

  .toolbox {
    width: 74px;
    flex: none;
    border: solid #3c3c3c;
    border-width: 0 3px 0 1px;
  }

  .strip {
    display: flex;
    align-items: center;
    height: 12px;
    padding: 0 4px;
    border-bottom: 1px solid var(--edge);
    background: #424242;
  }

  .strip.right {
    justify-content: flex-end;
  }

  .grip {
    display: block;
    width: 19px;
    height: 4px;
    flex: none;
    margin: 3px auto 0;
    background: repeating-linear-gradient(90deg, #333 0 1px, transparent 1px 2px);
  }

  .toolbox > .grip {
    margin-bottom: 6px;
  }

  .tools {
    display: grid;
    grid-template-columns: 30px 30px;
    grid-auto-rows: 24px;
    justify-content: center;
    justify-items: center;
    align-items: center;
    margin: 0 2px;
    padding: 1px 0;
    border-bottom: 1px solid #484848;
  }

  .tool {
    position: relative;
    display: grid;
    place-items: center;
    width: 28px;
    height: 22px;
    border-radius: 3px;
  }

  .tool.active {
    background: #303030;
  }

  .flyout::after {
    content: "";
    position: absolute;
    right: 1px;
    bottom: 0;
    border: solid transparent;
    border-width: 3px 0 0 3px;
    border-right: 0;
    border-bottom: 3px solid #ddd;
  }

  .colors {
    position: relative;
    height: 62px;
  }

  .colors span {
    position: absolute;
  }

  .fill-color {
    left: 8px;
    top: 4px;
    width: 37px;
    height: 37px;
    border: 1px solid #555;
    background: linear-gradient(to bottom right, #fff 48%, #f00 48% 52%, #fff 52%);
  }

  .stroke-color {
    left: 28px;
    top: 23px;
    width: 34px;
    height: 34px;
    border: 9px solid #000;
    outline: 1px solid #5a5a5a;
  }

  .swap {
    right: 5px;
    top: 5px;
  }

  .default {
    left: 9px;
    top: 44px;
  }

  .mode,
  .apply {
    display: flex;
    align-items: center;
    height: 24px;
  }

  .mode {
    gap: 5px;
    padding-left: 14px;
  }

  .mode button,
  .apply button {
    display: grid;
    place-items: center;
    width: 18px;
    height: 18px;
    border-radius: 3px;
  }

  .apply {
    gap: 2px;
    padding-left: 6px;
  }

  .box {
    width: 8px;
    height: 8px;
    border: 1px solid #ccc;
    background: #777;
  }

  .mode .serif {
    font: bold 14px/18px "Liberation Serif", serif;
    color: #b8b8b8;
  }

  .chip {
    width: 12px;
    height: 12px;
    border: 1px solid #aaa;
    background: #000;
  }

  .chip.grad {
    background: linear-gradient(90deg, #fff, #444);
  }

  .chip.none {
    background: linear-gradient(to bottom right, #fff 44%, #f00 44% 56%, #fff 56%);
  }

  .toggle {
    height: 29px;
    margin: 0 2px;
    padding: 7px 0 0 11px;
    border-bottom: 1px solid #484848;
  }

  .tools.view {
    border: 0;
  }

  /* document */
  .document {
    position: relative;
    display: flex;
    flex-direction: column;
    flex: 1;
    min-width: 0;
  }

  .tabs {
    display: flex;
    height: 29px;
    flex: none;
    border-bottom: 1px solid var(--edge);
    background: #424242;
  }

  .tab {
    display: flex;
    align-items: center;
    gap: 6px;
    padding: 2px 13px 0 14px;
    border-right: 1px solid var(--edge);
    background: #535353;
    font-size: 12px;
  }

  .tab .icon {
    color: #fff;
  }

  .ruler {
    display: flex;
    height: 16px;
    flex: none;
    border-bottom: 1px solid #8a8a8a;
    background: #202020;
  }

  .origin {
    width: 16px;
    flex: none;
    border-right: 1px solid #8a8a8a;
    background:
      repeating-linear-gradient(90deg, #999 0 1px, transparent 1px 2px) 0 4px / 100% 1px no-repeat,
      repeating-linear-gradient(#999 0 1px, transparent 1px 2px) 4px 0 / 1px 100% no-repeat;
  }

  .top-ruler {
    display: block;
    flex: 1;
    min-width: 0;
  }

  .ruler path,
  .side path {
    fill: #8a8a8a;
  }

  .side .cursor {
    fill: none;
    stroke: #ddd;
    stroke-dasharray: 1 1;
  }

  .ruler text,
  .side text {
    fill: #f2f2f2;
    font: 10px "Noto Sans", sans-serif;
  }

  .body {
    display: flex;
    flex: 1;
    min-height: 0;
  }

  .side {
    width: 16px;
    flex: none;
    overflow: hidden;
    border-right: 1px solid #8a8a8a;
    background: #202020;
  }

  .side svg {
    display: block;
  }

  .canvas {
    position: relative;
    flex: 1;
    overflow: hidden;
    background: #595959;
  }

  .pasteboard,
  .bleed,
  .sheet {
    position: absolute;
  }

  .pasteboard {
    left: 213px;
    top: 0;
    bottom: 0;
    width: 1220px;
    border: solid #747474;
    border-width: 0 1px;
    background: #5e5e5e;
  }

  .bleed {
    left: 611px;
    top: 6px;
    width: 424px;
    height: 870px;
    border: 1px solid #f0546a;
  }

  .sheet {
    left: 623px;
    top: 18px;
    width: 400px;
    height: 846px;
    border: 1px solid #9c94ea;
    border-top-color: #d88cc8;
    border-bottom-color: #d88cc8;
    background: #fff;
    box-shadow: 1px 2px #000;
  }

  .scroll {
    display: flex;
    align-items: flex-end;
    justify-content: center;
    width: 16px;
    flex: none;
    padding-bottom: 5px;
    background: #4a4a4a;
  }

  .scroll .chev {
    opacity: 0.6;
  }

  .status {
    display: flex;
    align-items: center;
    height: 16px;
    flex: none;
    padding: 1px 3px 0 14px;
    font-size: 12px;
  }

  .zoom {
    width: 42px;
  }

  .nav-first {
    margin-left: 11px;
  }

  .nav-prev {
    margin: 0 10px;
  }

  .goto {
    display: flex;
    width: 90px;
    height: 15px;
    border: 1px solid #707070;
    border-radius: 2px;
    background: #434343;
  }

  .goto input {
    flex: 1;
    width: 0;
    padding-left: 4px;
  }

  .goto span {
    display: grid;
    place-items: center;
    width: 18px;
    border-left: 1px solid #707070;
  }

  .nav-next {
    margin: 0 12px 0 11px;
  }

  .preflight {
    margin: 0 17px 0 15px;
  }

  .profile {
    width: 101px;
    white-space: nowrap;
  }

  .dot {
    width: 10px;
    height: 10px;
    margin: 0 7px 0 14px;
    border-radius: 50%;
    background: #149614;
  }

  .errors {
    width: 101px;
  }

  .resize {
    width: 10px;
    height: 10px;
    margin-left: 6px;
    background: repeating-linear-gradient(90deg, #777 0 1px, transparent 1px 2px);
    clip-path: polygon(100% 0, 100% 100%, 0 100%);
  }

  /* floating pages panel */
  .panel {
    position: absolute;
    top: 9px;
    right: 0;
    display: flex;
    flex-direction: column;
    width: 241px;
    height: 702px;
    border: solid var(--edge);
    border-width: 4px 1px 1px;
    background: #535353;
    box-shadow: -1px 1px 3px rgba(0, 0, 0, 0.3);
  }

  .panel-tabs {
    display: flex;
    align-items: center;
    height: 27px;
    flex: none;
    padding-right: 5px;
    background: linear-gradient(#383838 0 0) 0 100% / 100% 1px no-repeat, #424242;
    color: #a8a8a8;
    font-size: 12px;
  }

  .panel-tabs button {
    height: 27px;
    padding: 0 13px;
    border-right: 1px solid var(--edge);
  }

  .panel-tabs .clip {
    width: 56px;
    padding-right: 0;
    overflow: hidden;
    white-space: nowrap;
  }

  .panel-tabs .current {
    display: flex;
    align-items: center;
    gap: 5px;
    padding: 0 11px 0 7px;
    background: #535353;
    color: #fff;
  }

  .panel-tabs i {
    width: 1px;
    height: 11px;
    margin: 0 7px;
    background: #999;
  }

  .masters {
    padding: 1px 0 3px;
    border-bottom: 2px solid #606060;
  }

  .master {
    display: flex;
    align-items: center;
    justify-content: space-between;
    height: 29px;
    padding: 0 20px 0 4px;
  }

  .master span {
    width: 12px;
    height: 24px;
    border: 1px solid #888;
    background: #fff;
  }

  .pages {
    display: flex;
    flex-direction: column;
    align-items: center;
    align-self: flex-start;
    flex: 1;
    margin-left: 16px;
    padding-top: 4px;
  }

  .marker {
    fill: #c8c8c8;
    flex: none;
  }

  .first {
    position: relative;
    margin-top: 1px;
  }

  .first::after {
    content: "";
    position: absolute;
    inset: -4px -3px -3px auto;
    width: 4px;
    border: 1px solid #b0b0b0;
    border-width: 1px 2px 1px 0;
  }

  .thumb {
    display: block;
    width: 18px;
    height: 36px;
    flex: none;
    border: 1px solid #888;
    background: #fff;
    color: #111;
    font-size: 12px;
    line-height: 13px;
  }

  .thumb span {
    display: block;
    width: 12px;
    height: 13px;
    margin: 0 auto 21px;
    background: #fff;
  }

  .thumb.selected {
    background: #96c3f5;
  }

  .num {
    width: 12px;
    height: 14px;
    flex: none;
    margin: 6px 3px 8px 0;
    line-height: 14px;
    font-size: 12px;
    text-align: center;
  }

  .now {
    background: #2d8ceb;
  }

  .panel-foot {
    display: flex;
    align-items: center;
    gap: 15px;
    height: 26px;
    flex: none;
    padding: 3px 22px 0 6px;
    border-top: 1px solid #484848;
  }

  .panel-foot span {
    flex: 1;
    white-space: nowrap;
  }

  .panel-end {
    height: 8px;
    flex: none;
    border-top: 2px solid var(--edge);
  }

  .panel-end .grip {
    margin-top: 1px;
  }

  /* dock */
  .dock {
    width: 167px;
    flex: none;
    border: solid var(--edge);
    border-width: 0 1px 0 2px;
  }

  .group {
    display: flex;
    flex-direction: column;
    gap: 4px;
    padding-bottom: 5px;
    border-bottom: 1px solid var(--edge);
  }

  .entry {
    display: flex;
    align-items: center;
    height: 24px;
    margin: 0 4px;
    border: 1px solid transparent;
    border-radius: 3px;
    text-align: left;
  }

  .entry.active {
    border-color: #606060;
    background: #383838;
  }

  .entry.latin {
    font-size: 12px;
  }

  .glyph {
    width: 29px;
    padding-left: 5px;
    margin-right: 5px;
  }

  /* taskbar peeking out below the window */
  .taskbar {
    display: flex;
    justify-content: flex-end;
    overflow: hidden;
    padding-right: 14px;
    background: #444;
  }

  .task {
    width: 48px;
    height: 8px;
    margin: 0 auto 0 441px;
    background: #707070;
  }

  .clock {
    padding-top: 3px;
  }
</style>
